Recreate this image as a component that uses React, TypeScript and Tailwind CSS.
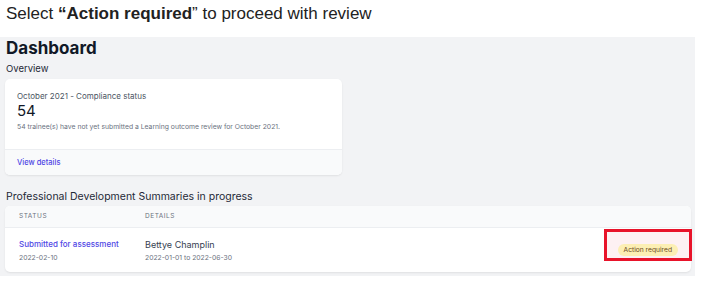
export default function App() {
  return (
    <div className="w-[702px] h-[282px] bg-white overflow-hidden font-['Inter',sans-serif]">
      {/* Caption */}
      <div className="h-[37px] pl-[6px] pt-[3px] font-['Liberation_Sans',Arial,sans-serif] text-[17px] leading-[22px] text-[#222]">
        Select <span className="font-bold">“Action required</span>” to proceed with review
      </div>

      {/* Dashboard panel */}
      <div className="w-[695px] h-[239px] bg-[#f2f3f5] px-[5px]">
        <h1 className="pl-[1px] pt-[1px] text-[17px] leading-[20px] font-bold text-[#111827]">Dashboard</h1>
        <div className="pl-[1px] mt-[5px] text-[9.5px] leading-[12px] text-[#1f2937]">Overview</div>

        {/* Compliance card */}
        <div className="mt-[4px] w-[337px] h-[96px] bg-white rounded-[5px] shadow-[0_1px_2px_rgba(0,0,0,0.08)] overflow-hidden flex flex-col">
          <div className="flex-1 px-[12px] pt-[12px]">
            <div className="text-[8px] leading-[11px] text-[#4b5563]">October 2021 - Compliance status</div>
            <div className="text-[15px] leading-[18px] text-[#111827]">54</div>
            <div className="mt-[2px] text-[6.8px] leading-[9px] text-[#6b7280]">
              54 trainee(s) have not yet submitted a Learning outcome review for October 2021.
            </div>
          </div>
          <div className="h-[26px] border-t border-[#eceef1] bg-[#f9fafb] px-[12px] flex items-center">
            <span className="text-[7.5px] font-medium text-[#4f46e5]">View details</span>
          </div>
        </div>

        <div className="pl-[1px] mt-[15px] text-[10.5px] leading-[13px] text-[#1f2937]">
          Professional Development Summaries in progress
        </div>

        {/* Table card */}
        <div className="mt-[3px] w-[686px] bg-white rounded-[5px] shadow-[0_1px_2px_rgba(0,0,0,0.08)]">
          <div className="h-[22px] bg-[#f9fafb] rounded-t-[5px] border-b border-[#eceef1] flex items-center text-[6.5px] tracking-[0.08em] text-[#6b7280]">
            <div className="w-[140px] pl-[14px]">STATUS</div>
            <div>DETAILS</div>
          </div>
          <div className="h-[44px] flex items-center">
            <div className="w-[140px] pl-[14px]">
              <div className="text-[8px] leading-[11px] font-medium text-[#4f46e5]">Submitted for assessment</div>
              <div className="mt-[3px] text-[6.8px] leading-[9px] text-[#6b7280]">2022-02-10</div>
            </div>
            <div className="flex-1">
              <div className="text-[9px] leading-[11px] text-[#374151]">Bettye Champlin</div>
              <div className="mt-[3px] text-[6.8px] leading-[9px] text-[#6b7280]">2022-01-01 to 2022-06-30</div>
            </div>
            <div className="relative h-full flex items-center pr-[13px]">
              {/* Highlight box */}
              <div className="absolute left-[-14px] right-[-1px] top-[1px] h-[32px] border-[3px] border-[#e8132a] bg-[#fdf1f3]" />
              <span className="relative h-[12px] px-[6px] rounded-full bg-[#fcefb4] text-[6.7px] leading-[12px] text-[#6b4a1a]">
                Action required
              </span>
            </div>
          </div>
        </div>
      </div>
    </div>
  );
}
